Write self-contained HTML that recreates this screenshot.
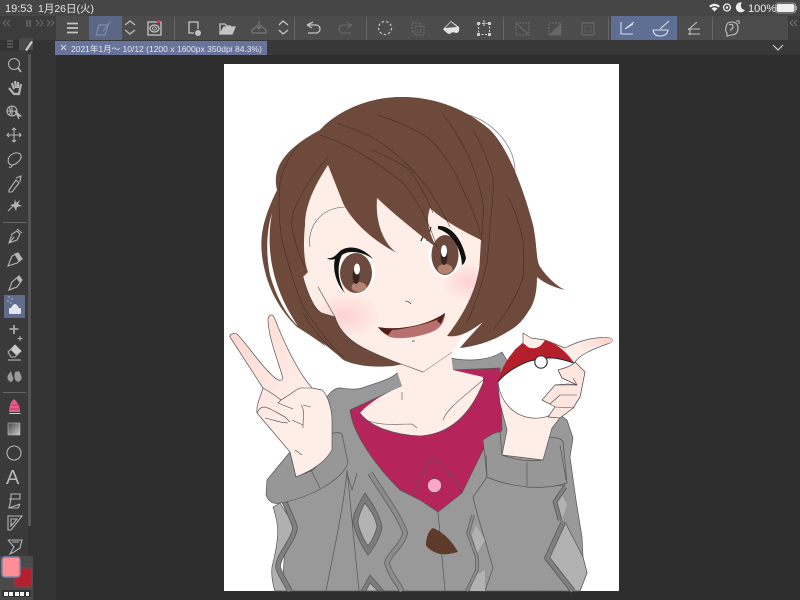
<!DOCTYPE html>
<html><head><meta charset="utf-8"><style>
html,body{margin:0;padding:0;width:800px;height:600px;overflow:hidden;background:#2e2e2e}
svg{display:block}
text{font-family:"Liberation Sans","Noto Sans CJK JP",sans-serif}
</style></head><body>
<svg width="800" height="600" viewBox="0 0 800 600" xmlns="http://www.w3.org/2000/svg">
<defs>
<radialGradient id="bl"><stop offset="0" stop-color="#fdd2d2"/><stop offset="1" stop-color="#fdd2d2" stop-opacity="0"/></radialGradient>
<linearGradient id="fg" x1="0" x2="1" y1="0" y2="1"><stop offset="0" stop-color="#ffd6cf"/><stop offset=".6" stop-color="#ffeee8"/></linearGradient>
<linearGradient id="tip" gradientUnits="userSpaceOnUse" x1="578" y1="345" x2="612" y2="338"><stop offset="0" stop-color="#fbd0c8" stop-opacity="0"/><stop offset="1" stop-color="#fbd0c8"/></linearGradient>
<linearGradient id="gr" x1="0" y1="0" x2="1" y2="1"><stop offset="0" stop-color="#444"/><stop offset="1" stop-color="#ccc"/></linearGradient>
<clipPath id="face"><path d="M328,165 C315,185 305,205 305,225 C303,245 304,262 308,272 L303,277 C308,295 315,310 322,313 L335,317 C342,340 365,350 393,361 L423,372 L452,352 C465,335 475,315 478,290 L481,240 L440,150 Z"/></clipPath>
</defs>
<!-- chrome -->
<rect width="800" height="600" fill="#2e2e2e"/>
<rect width="800" height="16" fill="#464646"/>
<rect y="16" width="800" height="24" fill="#3c3c3c"/>
<rect x="56" y="16" width="732" height="24" fill="#4c4c4c"/>
<rect y="40" width="800" height="15" fill="#383838"/>
<rect y="40" width="56" height="560" fill="#333"/>
<rect y="50" width="28" height="550" fill="#3a3a3a"/>
<rect x="28" y="54" width="3" height="472" fill="#555"/>
<rect x="0" y="556" width="33" height="44" fill="#4a4a4a"/>
<rect x="0" y="40" width="18" height="11" fill="#333"/>
<rect x="19" y="38" width="14" height="12" fill="#4a4a4a"/>
<text x="5" y="12" font-size="11" fill="#e4e4e4">19:53</text>
<text x="38" y="12" font-size="10.5" fill="#e4e4e4">1月26日(火)</text>
<!-- status icons -->
<g fill="#eee">
<path d="M709,6 Q714.500,1.500 720,6 L718.500,7.500 Q714.500,4.500 710.500,7.500Z"/><path d="M711.500,8.500 Q714.500,6 717.500,8.500 L714.500,11.500Z"/>
<circle cx="727" cy="7.500" r="3.500" fill="none" stroke="#eee" stroke-width="1.300"/><circle cx="727" cy="7.500" r="1.300"/>
<path d="M742,2.500 A5,5 0 1 0 745,10 A4.500,4.500 0 0 1 742,2.500Z"/>
<rect x="776.500" y="4" width="18" height="8" rx="2"/>
</g>
<text x="748" y="12" font-size="11" fill="#eee">100%</text>
<rect x="775.500" y="3" width="20" height="10" rx="2.500" fill="none" stroke="#aaa" stroke-width=".8"/>
<rect x="796" y="6" width="1" height="4" fill="#aaa"/>
<!-- top left glyphs -->
<g fill="none" stroke="#6a6a6a" stroke-width="1">
<path d="M6,20 L3,23 L6,26 M10,20 L7,23 L10,26"/><path d="M27,20 V27 M30,20 V27" stroke-width="1.500"/>
<path d="M36,20 L39,23 L36,26 M40,20 L43,23 L40,26M47,20 L50,23 L47,26 M51,20 L54,23 L51,26"/>
<path d="M7,41 H13 M7,44 H13 M7,47 H13" stroke="#777"/>
</g>
<path d="M25,50 L31,41 L33,42 L27,51 Z" fill="#ccc"/>
<!-- highlights -->
<rect x="89" y="16" width="33" height="24" fill="#5b6785"/>
<rect x="611" y="16" width="66" height="24" fill="#5f6f94"/>
<rect x="4" y="295" width="21" height="23" fill="#5f6c8c"/>
<!-- separators -->
<g stroke="#666" stroke-width="1">
<path d="M174.500,17V40M294.500,17V40M366.500,17V40M503.500,17V40M608.500,17V40M712.500,17V40M3,222.500H27M3,392.500H26"/>
</g>
<!-- toolbar icons -->
<g fill="none" stroke="#c4c4c4" stroke-width="1.300">
<path d="M67,23.500H78M67,28H78M67,32.500H78" stroke-width="1.700"/>
<path d="M125,25 L130,21 L135,25 M125,30 L130,34 L135,30" stroke="#bbb"/>
<rect x="148" y="22" width="13" height="13"/><ellipse cx="154.500" cy="28.500" rx="4.500" ry="3.500"/><ellipse cx="154.500" cy="28.500" rx="2" ry="1.500" stroke-width=".9"/>
<path d="M194,33 H189 V22 H198 V29"/><circle cx="198" cy="33" r="3" fill="#c4c4c4" stroke="none"/>
<path d="M220,34 V24 H225 L227,26 H231"/><path d="M220,34 H232 L235,27 H224 Z" fill="#c4c4c4"/>
<path d="M279,25 L283,21 L288,25 M279,30 L283,34 L288,30"/>
<path d="M307,25 L313,22 M307,25 L312,28 M307,25 H316 A4,4 0 0 1 316,33 H308"/>
</g>
<circle cx="158.500" cy="21.500" r="1.800" fill="#d8324f"/>
<g fill="none" stroke="#777" stroke-width="1.200">
<path d="M96,35 L99,25 H108 L105,35 Z M103,31 L111,21" stroke="#7f8aa6"/>
<path d="M252,33 H266 V30 L262,27 M252,33 V30 L256,27 M259,21 V28 M256,25 L259,29 L262,25"/>
<path d="M352,25 L346,22 M352,25 L347,28 M352,25 H343 A4,4 0 0 0 343,33 H351" stroke="#666"/>
<rect x="412" y="23" width="9" height="9" stroke-dasharray="2 1" stroke="#666"/><rect x="415" y="26" width="9" height="9" stroke-dasharray="2 1" stroke="#666"/>
<rect x="516" y="23" width="13" height="12" stroke="#666" stroke-dasharray="2 1"/><path d="M516,23 L529,35" stroke="#666"/>
<rect x="549" y="23" width="12" height="12" stroke="#666" stroke-dasharray="2 1"/><path d="M549,35 L561,23 V35 Z" fill="#666" stroke="none"/>
<rect x="582" y="23" width="12" height="12" stroke="#666"/><rect x="585" y="26" width="6" height="6" stroke="#5a5a5a"/>
</g>
<g stroke="#bbb" stroke-width="1.300" stroke-dasharray="2.500 2" fill="none"><circle cx="385" cy="28" r="6.500"/></g>
<path d="M451,21 L459,27 Q460,33 456,33 Q452,31 450,34 Q447,34 443,29 Z" fill="#e4e4e4"/><path d="M445,28 L451,22 L457,27 Z" fill="#555"/>
<g fill="none" stroke="#d0d0d0" stroke-width="1"><rect x="478.500" y="23.500" width="11" height="11" stroke-dasharray="2 1.500"/><path d="M484,20 V26"/></g>
<g fill="#ccc"><rect x="477" y="22" width="3" height="3"/><rect x="488" y="22" width="3" height="3"/><rect x="477" y="33" width="3" height="3"/><rect x="488" y="33" width="3" height="3"/></g>
<g fill="none" stroke="#d8dde8" stroke-width="1.100">
<path d="M621,22 V34 H633 M625,29 L634,22 M625,29 L633,24"/>
<path d="M653,30 H668 Q667,36 660,36 Q654,36 653,30 M660,29 L669,21"/>
</g>
<g fill="none" stroke="#c0c0c0" stroke-width="1.100"><path d="M688,30 L697,22 M688,29 H700 M688,34 H700 M690,28 V35"/>
<path d="M731,22 Q738,22 738,28 Q738,35 731,35 L727,36 L727,33 Q725,31 726,27 Q727,22 731,22Z M729,25 Q733,23 733,27 Q733,29 731,29 V31 M736,21 H739 V24"/></g>
<path d="M793,20 L790,23 L793,26 M797,20 L794,23 L797,26" fill="none" stroke="#777"/>
<path d="M773,45 L778,50 L783,45" fill="none" stroke="#ccc" stroke-width="1.200"/>
<!-- tab -->
<rect x="55" y="41" width="212" height="14" fill="#68749a"/>
<path d="M61,45 L66,50 M66,45 L61,50" stroke="#d5d9e6" stroke-width=".9"/>
<text x="71" y="52" font-size="8.500" fill="#e2e5ee">2021年1月〜 10/12 (1200 x 1600px 350dpi 84.3%)</text>
<!-- tool column -->
<g fill="none" stroke="#b4b4b4" stroke-width="1.100">
<circle cx="14" cy="64" r="5.500"/><path d="M18,68 L21,72" stroke-width="1.800"/>
<path d="M9,88 L14,94 H19 L21,84 M12,83 L14,89 M15,81 L16,88 M18,82 L18,88" stroke-width="2.200"/>
<circle cx="12" cy="111" r="5"/><path d="M7,111 H17 M12,106 V116 M9,107 Q12,112 9,115"/><path d="M15,111 L21,116 L18,116 L19,119Z" fill="#b4b4b4"/>
<path d="M14,128 V142 M7,135 H21 M12,130 L14,128 L16,130 M12,140 L14,142 L16,140 M9,133 L7,135 L9,137 M19,133 L21,135 L19,137"/>
<path d="M12,165 C6,164 7,155 15,153 C22,152 23,158 18,162 C15,165 12,165 12,165 Q12,168 9,167"/>
<path d="M9,190 L16,180 L19,183 L12,192 L9,192 Z M16,178 L21,176 L20,182"/>
<path d="M8,211 L13,206"/><path d="M15,199 L16,203 L20,200 L18,204 L22,206 L17,207 L16,211 L14,207 L10,205 L14,204 Z" fill="#b4b4b4" stroke="none"/>
<path d="M9,243 L12,234 L17,231 L20,234 L17,240 Z M9,243 L14,237 M17,229 L22,233"/>
<path d="M8,266 L12,256 L18,253 L22,259 L17,263 Z"/><path d="M15,254 L18,253 L22,259 L19,261Z" fill="#b4b4b4"/>
<path d="M9,290 L12,282 L19,276 L22,280 L17,287 Z M9,290 L14,288"/><path d="M17,278 L19,276 L22,280 L20,282Z" fill="#b4b4b4"/>
<path d="M14,325 V334 M9.500,329 H18.500" stroke-width="1.600"/><path d="M20,336 V341 M17.500,338.500 H22.500" stroke-width="1"/>
<path d="M8,352 L15,345 L21,351 L15,357 H11 Z"/><path d="M8,360 H21"/><path d="M15,345 L21,351 L16,355 L11,350Z" fill="#ccc" stroke="none"/>
<circle cx="14" cy="453" r="7"/>
<path d="M9,508 L20,504 M9,499 H20 V494 H11 V499 L9,508 H18 L20,504"/>
<path d="M8,516 H22 L11,530 H8 Z M11,519 H17 L11,526Z"/>
<path d="M8,540 H22 L20,548 L14,552 L10,554 L14,547 L8,540 M12,542 H19"/>
</g>
<rect x="9" y="308" width="12" height="6" rx="1" fill="#e0e4ee"/><path d="M11,308 Q15,300 19,308 Z" fill="#e0e4ee"/>
<g fill="#c3cbe0"><circle cx="9" cy="297" r=".7"/><circle cx="12" cy="299" r=".7"/><circle cx="8" cy="301" r=".7"/><circle cx="11" cy="303" r=".7"/></g>
<path d="M8,375 Q6,380 11,382 Q15,380 12,375 L11,371 Z M15,372 Q13,380 18,382 Q23,380 21,375 L19,371 Z" fill="#999"/>
<path d="M9,412 Q9,403 14,399 Q20,404 20,412 Z" fill="#e75b8c"/><path d="M9,413 H21 L20,414 H10 Z" fill="#f5d93a"/><path d="M9,409 H20 M11,405 H18" stroke="#b43b6b"/>
<rect x="8" y="423" width="12" height="12" fill="url(#gr)" stroke="#bbb" stroke-width=".6"/>
<text x="6" y="484" font-size="20" fill="#b8b8b8">A</text>
<!-- colours -->
<rect x="14" y="568" width="18" height="19" rx="2" fill="#b3202e" stroke="#555"/>
<rect x="2" y="557" width="18" height="20" rx="3" fill="#ff8d97" stroke="#7686ab" stroke-width="1.500"/>
<rect x="2" y="590" width="29" height="7" rx="1" fill="#333"/>
<g fill="#f2f2f2"><rect x="4" y="592" width="4" height="4"/><rect x="9" y="592" width="4" height="4"/><rect x="15" y="592" width="4" height="4"/><rect x="20" y="592" width="4" height="4"/><rect x="26" y="592" width="3" height="4"/></g>

<!-- page -->
<rect x="224" y="64" width="395" height="527" fill="#fff"/>

<g stroke="#555" stroke-width=".7" stroke-linejoin="round">
<path d="M458,113 C480,115 500,130 510,150 C514,158 515,165 515,172" fill="none" stroke="#777"/>
<!-- right back strip + body -->
<path d="M500,355 L540,400 L567,420 L573,438 L570,457 L576,500 L582,537 L583,557 L587,573 L580,591 H520 L530,470Z" fill="#999"/>
<path d="M327,397 C330,392 335,388 340,388 C350,389 355,390 362,388 C375,383 390,380 397,373 L425,375 L450,358 C470,362 490,360 502,352 L530,400 L560,470 L540,591 H282 L290,470 L332,450 Z" fill="#999"/>
<!-- left panel + band -->
<path d="M273,507 C279,525 280,535 272,567 C271,577 273,585 275,591 H292 L278,567 L295,527 L280,503 Z" fill="#b0b0b0"/>
<path d="M277,482 C282,500 294,520 295,528 C294,540 278,555 278,567 C280,575 287,585 290,591" fill="none" stroke="#555" stroke-width="5.500"/>
<path d="M277,482 C282,500 294,520 295,528 C294,540 278,555 278,567 C280,575 287,585 290,591" fill="none" stroke="#808080" stroke-width="4"/>
<!-- left cuff -->
<path d="M267,480 L290,452 L296,477 L313,470 L332,450 L330,435 C333,432 340,432 342,434 L348,463 C342,480 310,498 280,503 C272,505 268,500 266,495 Z" fill="#979797"/>
<path d="M311,470 L320,488 M326,591 C332,560 345,500 347,470 L359,591 M347,473 L352,490 L357,473" fill="none" stroke="#555"/>
<!-- sweater cable bands -->
<path d="M370,473 C385,497 402,520 405,533 C403,545 388,555 387,563 C390,575 398,583 402,591" fill="none" stroke="#555" stroke-width="5.500"/>
<path d="M370,473 C385,497 402,520 405,533 C403,545 388,555 387,563 C390,575 398,583 402,591" fill="none" stroke="#8c8c8c" stroke-width="4.200"/>
<!-- diamonds -->
<path d="M365,493 C358,505 352,515 353,523 C356,535 362,547 368,555 C375,547 381,535 382,527 C380,515 372,503 365,493Z" fill="#7c7c7c"/>
<path d="M365,503 C361,510 358,517 358,523 C360,532 364,540 368,546 C372,540 376,532 377,526 C375,516 370,510 365,503Z" fill="#b3b3b3"/>
<path d="M370,575 L361,591 H384 Z" fill="#7c7c7c"/><path d="M370,583 L366,591 H378 Z" fill="#b3b3b3"/>
<!-- shirt -->
<path d="M402,386 L350,410 C352,430 370,460 400,490 L420,500 L438,512 L462,493 L483,450 L502,430 L500,368 L453,370 Z" fill="#b5255b"/>
<!-- chest skin -->
<path d="M393,360 L402,386 C385,393 370,402 360,413 C370,427 395,435 420,436 C450,434 470,415 483,383 V377 L453,370 L450,345 Z" fill="#ffeee8" stroke="none"/>
<path d="M360,413 C370,427 395,435 420,436 C450,434 470,415 483,383" fill="none" stroke="#555"/>
<path d="M366,420 C380,426 395,424 412,424 L417,428 M402,392 V400 M443,420 C447,408 466,395 483,380" fill="none" stroke="#555" stroke-width=".6"/>
<!-- flap -->
<path d="M413,497 C416,485 423,467 432,459 C442,462 455,478 462,493" fill="none" stroke="#555"/>
<circle cx="434.500" cy="485.500" r="7" fill="#f9a6c8" stroke="#5b4b52"/>
<path d="M438,512 L445,591" fill="none" stroke="#555"/>
<path d="M433,528 C445,533 453,543 458,552 C450,554 445,555 440,554 C433,552 428,549 426,545 C426,537 429,530 433,528Z" fill="#5d3a2a" stroke="none"/>
<!-- right sleeve -->
<path d="M473,497 L478,517 L485,540 L493,568 L485,591 H570 L547,557 L563,522 L560,520 L555,502 L565,485 L527,487 L487,477 Z" fill="#999"/>
<path d="M562,495 L567,505 L562,520 L556,503 Z" fill="#b2b2b2" stroke="none"/>
<path d="M565,522 L583,557 L587,573 L580,591 H572 L549,557 Z" fill="#b2b2b2"/>
<path d="M563,523 L547,558 L573,591" fill="none" stroke="#555" stroke-width="5.500"/>
<path d="M563,523 L547,558 L573,591" fill="none" stroke="#808080" stroke-width="4"/>
<path d="M565,487 L555,502 L560,520" fill="none" stroke="#555" stroke-width="4.500"/>
<path d="M565,487 L555,502 L560,520" fill="none" stroke="#808080" stroke-width="3"/>
<path d="M476,525 L485,540 L477,553 L472,535 Z" fill="#b2b2b2" stroke="none"/>
<path d="M472,577 L485,570 V591 H470 Z" fill="#b2b2b2" stroke="none"/>
<path d="M467,591 L477,570 L477,557 L468,533 L473,515" fill="none" stroke="#555" stroke-width="3.500"/>
<path d="M467,591 L477,570 L477,557 L468,533 L473,515" fill="none" stroke="#8c8c8c" stroke-width="2.300"/>
<path d="M483,440 C490,435 495,432 500,432 L502,455 C515,460 530,462 542,460 L545,437 C552,437 560,438 563,441 L567,483 C555,487 540,488 527,487 C510,485 495,481 487,477 Z" fill="#979797"/>
<path d="M527,462 V486 M560,445 L566,480 M486,455 L487,477" fill="none" stroke="#555"/>
<!-- left hand -->
<path d="M263,388 L230,337 C229,334 234,333 237,334 C248,345 265,372 278,380 C283,381 283,379 282,375 C276,355 268,335 268,319 C269,314 273,314 274,317 C285,345 298,372 312,388 L322,390 C328,395 332,410 332,420 L332,450 C325,462 313,470 296,477 L290,452 L257,413 C256,405 260,398 263,388 Z" fill="url(#fg)"/>
<path d="M263,388 C270,392 275,395 281,400 L278,403 L293,409 M257,413 C262,402 268,408 285,417 L290,422 M265,418 C275,420 280,423 288,423 M281,400 C290,395 295,390 300,388 L312,388 M301,405 C305,410 303,415 303,428 M292,420 L303,425 M303,405 L311,407 M295,450 L302,455" fill="none" stroke="#444" stroke-width=".6"/>
<!-- right hand -->
<path d="M498,385 L500,403 L507,430 L502,455 L543,460 L552,428 L560,418 L573,408 L580,397 L585,372 L575,362 C580,355 590,350 610,343 C613,341 613,339 610,338 C598,336 580,340 565,348 L545,340 L531,338 L523,333 L523,343 L515,350 Z" fill="#ffeee8"/>
<path d="M578,352 C588,348 598,345 610,343 C613,341 613,339 610,338 C600,337 590,339 580,342 Z" fill="url(#tip)" stroke="none"/>
<!-- ball -->
<path d="M498,382 C500,400 512,416 532,418 C552,420 570,405 576,385 C577,375 576,368 574,363 C565,360 555,357 548,358 L535,360 C525,361 505,372 498,382Z" fill="#fff"/>
<path d="M498,382 C500,370 510,352 523,343 C526,345 528,348 531,348 C536,349 541,347 545,340 C556,343 567,352 574,363 C565,360 555,357 548,358 L535,360 C525,361 505,372 498,382 Z" fill="#b3202c" stroke="none"/>
<path d="M498,382 C505,372 525,361 535,360 L548,358 C555,357 565,360 574,363" fill="none" stroke="#222" stroke-width="1"/>
<circle cx="541" cy="362" r="6.200" fill="#fff" stroke="#333" stroke-width="1.200"/>
<!-- fingers -->
<path d="M575,362 L585,372 L580,397 L573,408 L560,418 L548,417 L555,407 L550,404 L542,400 L555,385 L568,384 L577,385 L562,378 L558,370 C565,368 572,366 575,362 Z" fill="#ffe6de"/>
<path d="M558,370 L562,378 L577,385 L573,378 M555,385 L577,385 M550,404 L560,395 L577,395 M555,407 L575,408" fill="none" stroke="#444" stroke-width=".6"/>
<path d="M393,360 L423,372 L452,352" fill="none" stroke="#333"/>
</g>

<!-- back hair -->
<path d="M320,130 C340,108 375,96 405,97 C440,98 470,112 490,130 C510,150 525,195 533,225 C537,245 536,258 539,265 L537,277 L528,300 L447,336 L425,360 L393,366 C370,368 355,365 343,360 C325,345 310,335 297,327 C280,310 268,290 263,262 C258,235 265,215 277,190 C272,170 282,150 320,130 Z" fill="#6e4a3c"/>
<!-- skin -->
<path d="M328,165 C315,185 305,205 305,225 C303,245 304,262 308,272 L303,277 C308,295 315,310 322,313 L335,317 C342,340 365,350 393,361 L423,372 L452,352 C465,335 475,315 478,290 L481,240 L440,150 Z" fill="#ffeee8"/>
<g clip-path="url(#face)">
<ellipse cx="345" cy="316" rx="36" ry="24" fill="url(#bl)"/>
<ellipse cx="468" cy="282" rx="26" ry="20" fill="url(#bl)"/>
</g>
<path d="M303,277 C308,295 315,310 322,313 L335,317 C342,340 365,350 393,361 L423,372" fill="none" stroke="#444" stroke-width=".6"/>
<path d="M318,287 L335,317" stroke="#444" stroke-width=".6" fill="none"/>
<path d="M310,247 C307,230 318,208 345,207" fill="none" stroke="#555" stroke-width=".6"/>
<!-- left eye -->
<ellipse cx="357" cy="272" rx="18" ry="21.500" fill="#fff"/>
<ellipse cx="356" cy="273" rx="16" ry="20" fill="#6d4a3e"/>
<ellipse cx="359" cy="287" rx="7.500" ry="5" fill="#b38271"/>
<ellipse cx="356" cy="276" rx="3.500" ry="8" fill="#38241f"/>
<ellipse cx="357" cy="269" rx="3" ry="5.500" fill="#fff"/>
<path d="M327,258 C333,259 336,255 340,251 C348,245 362,246 373,259 C362,251 348,250 342,255 C338,262 336,278 345,293 C337,285 332,270 335,259 C332,260 329,260 327,258 Z" fill="#111"/>
<!-- right eye -->
<ellipse cx="445" cy="255" rx="17" ry="22" fill="#fff"/>
<ellipse cx="445" cy="255" rx="13.500" ry="20" fill="#6d4a3e"/>
<ellipse cx="445" cy="269" rx="7.500" ry="5" fill="#b38271"/>
<ellipse cx="444" cy="256" rx="3.500" ry="9" fill="#38241f"/>
<ellipse cx="444" cy="251" rx="3" ry="6" fill="#fff"/>
<path d="M438,226 C450,225 462,238 466,258 C465,262 464,264 462,265 C461,248 452,233 438,229 Z" fill="#111"/>
<path d="M422,232 L429,227 L433,230 L428,243 L423,243 Z" fill="#fff"/>
<path d="M426,229 L421,241 M431,227 L427,241" stroke="#222" stroke-width="1.200"/>
<!-- nose & mouth -->
<path d="M405,301 Q409,301 411,304" fill="none" stroke="#444" stroke-width=".7"/>
<path d="M378,327 C400,331 428,325 445,313 C445,322 440,328 434,331 C420,337 400,340 390,337 C385,335 382,331 378,327Z" fill="#b5706f"/>
<path d="M378,327 C400,331 428,325 445,313 L444,317 C425,325 405,329 392,330 L388,335 C383,333 380,330 378,327Z" fill="#4e2218"/>
<path d="M445,313 L441,324 L437,321 Z" fill="#4e2218"/>
<path d="M412,341 H415" stroke="#333" stroke-width=".7"/>
<!-- front hair -->
<path d="M320,130 L328,165 L343,203 C352,222 375,242 397,253 C385,245 375,225 377,198 C395,215 420,235 437,248 C430,235 425,222 430,208 C445,222 465,232 481,240 C482,270 475,300 447,336 C458,338 470,332 483,322 C478,328 468,338 460,348 C478,346 495,340 507,332 C515,328 522,322 528,312 C535,303 537,290 537,277 C543,282 552,287 565,290 C555,285 545,275 539,265 C536,258 537,245 533,225 C525,195 510,150 490,130 C470,112 440,98 405,97 C375,96 340,108 320,130 Z" fill="#6e4a3c"/>
<!-- white slivers -->
<path d="M272,213 C266,245 270,285 298,326 C286,315 276,296 270,275 C266,255 266,232 272,213Z" fill="#fff"/>
<path d="M323,343 C332,350 340,357 347,363 L337,360 Z" fill="#fff"/>
<!-- hair strands -->
<g fill="none" stroke="#3a2822" stroke-width=".55" opacity=".9">
<path d="M337,123 C350,128 365,133 377,140 C400,155 415,172 427,187 C436,200 444,214 450,227"/>
<path d="M320,135 C335,140 350,147 360,153 C375,162 390,172 403,183 C418,200 430,225 437,247"/>
<path d="M377,115 C395,120 412,128 427,137 C445,152 455,172 463,190 C472,208 478,222 480,233"/>
<path d="M442,113 C452,125 460,140 467,153 C475,170 480,188 483,203 C484,218 482,230 481,240"/>
<path d="M473,130 C482,145 488,160 493,177 C494,195 492,210 490,223 C490,240 488,252 487,263 C482,285 475,305 467,323"/>
<path d="M372,150 C385,155 398,162 410,170 C420,185 428,200 433,213"/>
<path d="M508,197 C516,212 520,226 523,240 C524,252 524,265 523,277 C518,295 505,315 493,330"/>
<path d="M298,146 C288,158 282,170 280,183 C278,205 279,222 282,240 C288,265 295,287 303,307 C315,325 330,345 343,357"/>
<path d="M328,157 C312,175 300,195 293,213 C291,222 292,228 293,233 C296,245 300,258 305,267"/>
<path d="M303,313 C312,328 322,340 333,350"/>
</g>
</svg>
</body></html>
